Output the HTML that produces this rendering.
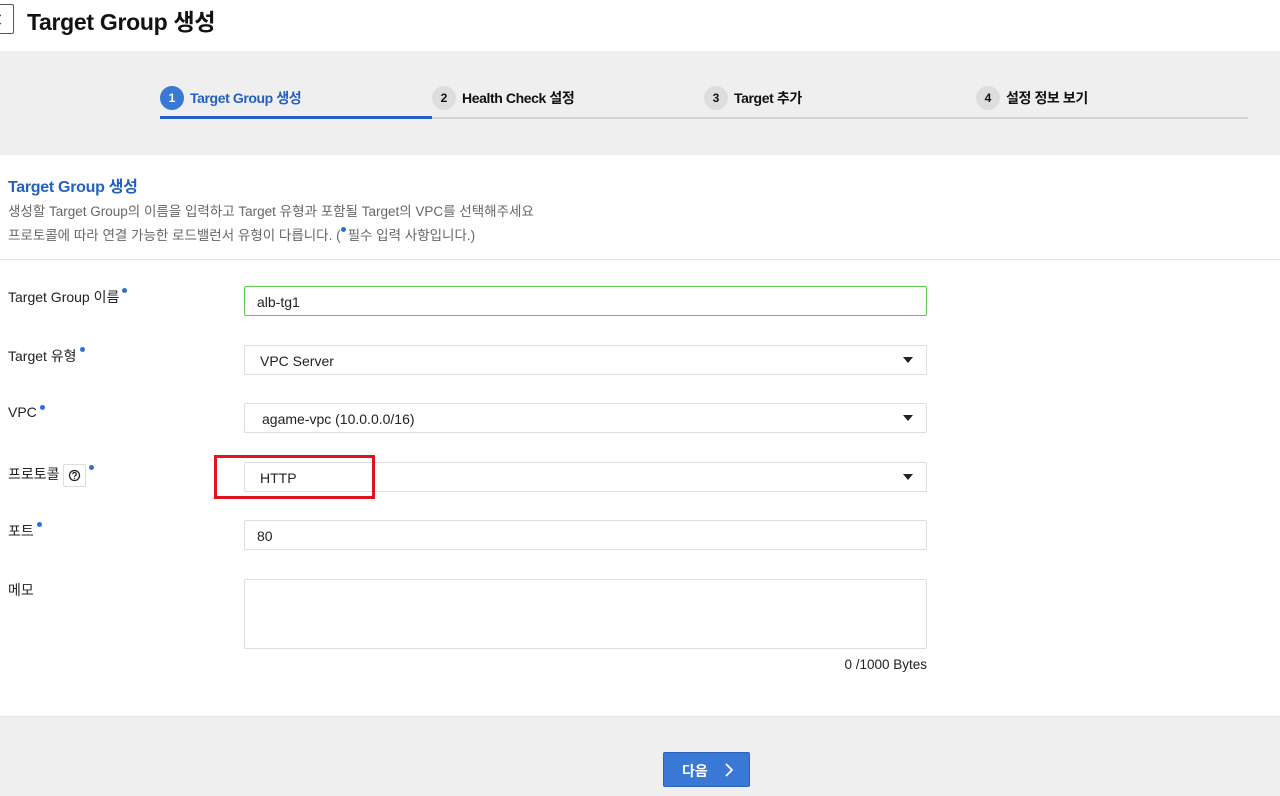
<!DOCTYPE html>
<html><head><meta charset="utf-8"><style>
*{box-sizing:border-box;margin:0;padding:0}
body{width:1280px;height:796px;overflow:hidden;background:#fff;font-family:"Liberation Sans","Noto Sans CJK KR",sans-serif;color:#222;position:relative}
.a{position:absolute}
.back{left:-12px;top:4px;width:26px;height:30px;border:1px solid #555;border-radius:2px}
.back:after{content:"";position:absolute;right:9px;top:11px;width:6px;height:6px;border-left:1.5px solid #333;border-bottom:1.5px solid #333;transform:rotate(45deg)}
.steps{left:0;top:51px;width:1280px;height:104px;background:#efefef}
.step{position:absolute;top:86px;font-size:14px;font-weight:bold;display:flex;align-items:center;gap:6px;color:#111;letter-spacing:-0.4px}
.num{width:24px;height:24px;border-radius:50%;background:#ddd;font-size:12px;display:flex;align-items:center;justify-content:center;letter-spacing:0}
.lab{font-size:14px;color:#222}
.dot{display:inline-block;width:5px;height:5px;border-radius:50%;background:#2d6fd8;vertical-align:top;margin-left:3px;margin-top:1px}
.in{position:absolute;left:244px;width:683px;height:30px;border:1px solid #ddd;border-radius:2px;font-size:14px;padding:7px 12px;color:#222}
.arr{position:absolute;right:13px;top:11px;border-left:5px solid transparent;border-right:5px solid transparent;border-top:6px solid #222}
</style></head><body>
<div class="a back"></div>
<div class="a" style="left:27px;top:3px;font-size:23px;font-weight:bold;color:#111;letter-spacing:-0.3px">Target Group 생성</div>
<div class="a steps"></div>
<div class="a" style="left:160px;top:117px;width:1088px;height:2px;background:#d4d4d4"></div>
<div class="a" style="left:160px;top:116px;width:272px;height:3px;background:#2460c4"></div>
<div class="step" style="left:160px;color:#2460c4"><span class="num" style="background:#3a78d6;color:#fff">1</span>Target Group 생성</div>
<div class="step" style="left:432px"><span class="num">2</span>Health Check 설정</div>
<div class="step" style="left:704px"><span class="num">3</span>Target 추가</div>
<div class="step" style="left:976px"><span class="num">4</span>설정 정보 보기</div>
<div class="a" style="left:8px;top:173px;font-size:16px;font-weight:bold;color:#2460c4;letter-spacing:-0.3px">Target Group 생성</div>
<div class="a" style="left:8px;top:200px;font-size:13.5px;color:#666">생성할 Target Group의 이름을 입력하고 Target 유형과 포함될 Target의 VPC를 선택해주세요</div>
<div class="a" style="left:8px;top:224px;font-size:13.5px;color:#666">프로토콜에 따라 연결 가능한 로드밸런서 유형이 다릅니다. (<span class="dot" style="margin:3px 2px 0 0"></span>필수 입력 사항입니다.)</div>
<div class="a" style="left:0;top:259px;width:1280px;height:1px;background:#e2e2e2"></div>
<div class="a lab" style="left:8px;top:287px">Target Group 이름<span class="dot"></span></div>
<div class="a lab" style="left:8px;top:346px">Target 유형<span class="dot"></span></div>
<div class="a lab" style="left:8px;top:404px">VPC<span class="dot"></span></div>
<div class="a lab" style="left:8px;top:464px">프로토콜 <span style="display:inline-block;width:23px;height:23px;border:1px solid #ddd;border-radius:2px;vertical-align:middle;position:relative"><svg width="21" height="21" viewBox="0 0 21 21" style="position:absolute;left:0;top:0"><circle cx="10.5" cy="10.5" r="5" fill="none" stroke="#222" stroke-width="1.3"/><path d="M8.8 9.2a1.7 1.7 0 1 1 2.4 1.5c-.5.3-.7.6-.7 1.1" fill="none" stroke="#222" stroke-width="1.2"/><circle cx="10.5" cy="13.3" r=".7" fill="#222"/></svg></span><span class="dot"></span></div>
<div class="a lab" style="left:8px;top:521px">포트<span class="dot"></span></div>
<div class="a lab" style="left:8px;top:580px">메모</div>
<div class="in" style="top:286px;border-color:#5ac84a">alb-tg1</div>
<div class="in" style="top:345px;padding-left:15px">VPC Server<span class="arr"></span></div>
<div class="in" style="top:403px;padding-left:17px">agame-vpc (10.0.0.0/16)<span class="arr"></span></div>
<div class="in" style="top:462px;padding-left:15px">HTTP<span class="arr"></span></div>
<div class="a" style="left:214px;top:455px;width:161px;height:44px;border:3px solid #e0141c"></div>
<div class="in" style="top:520px">80</div>
<div class="in" style="top:579px;height:70px"></div>
<div class="a" style="left:700px;width:227px;text-align:right;top:657px;font-size:13.5px">0 /1000 Bytes</div>
<div class="a" style="left:0;top:716px;width:1280px;height:80px;background:#efefef;border-top:1px solid #e4e4e4"></div>
<div class="a" style="left:663px;top:752px;width:87px;height:35px;background:#3a78d6;border:1px solid #2a63b8;border-radius:2px;color:#fff;font-size:14px;font-weight:bold;padding:8px 0 0 18px">다음<svg width="10" height="14" viewBox="0 0 10 14" style="position:absolute;left:60px;top:10px"><path d="M2 1l6 6-6 6" fill="none" stroke="#fff" stroke-width="1.8"/></svg></div>
</body></html>
